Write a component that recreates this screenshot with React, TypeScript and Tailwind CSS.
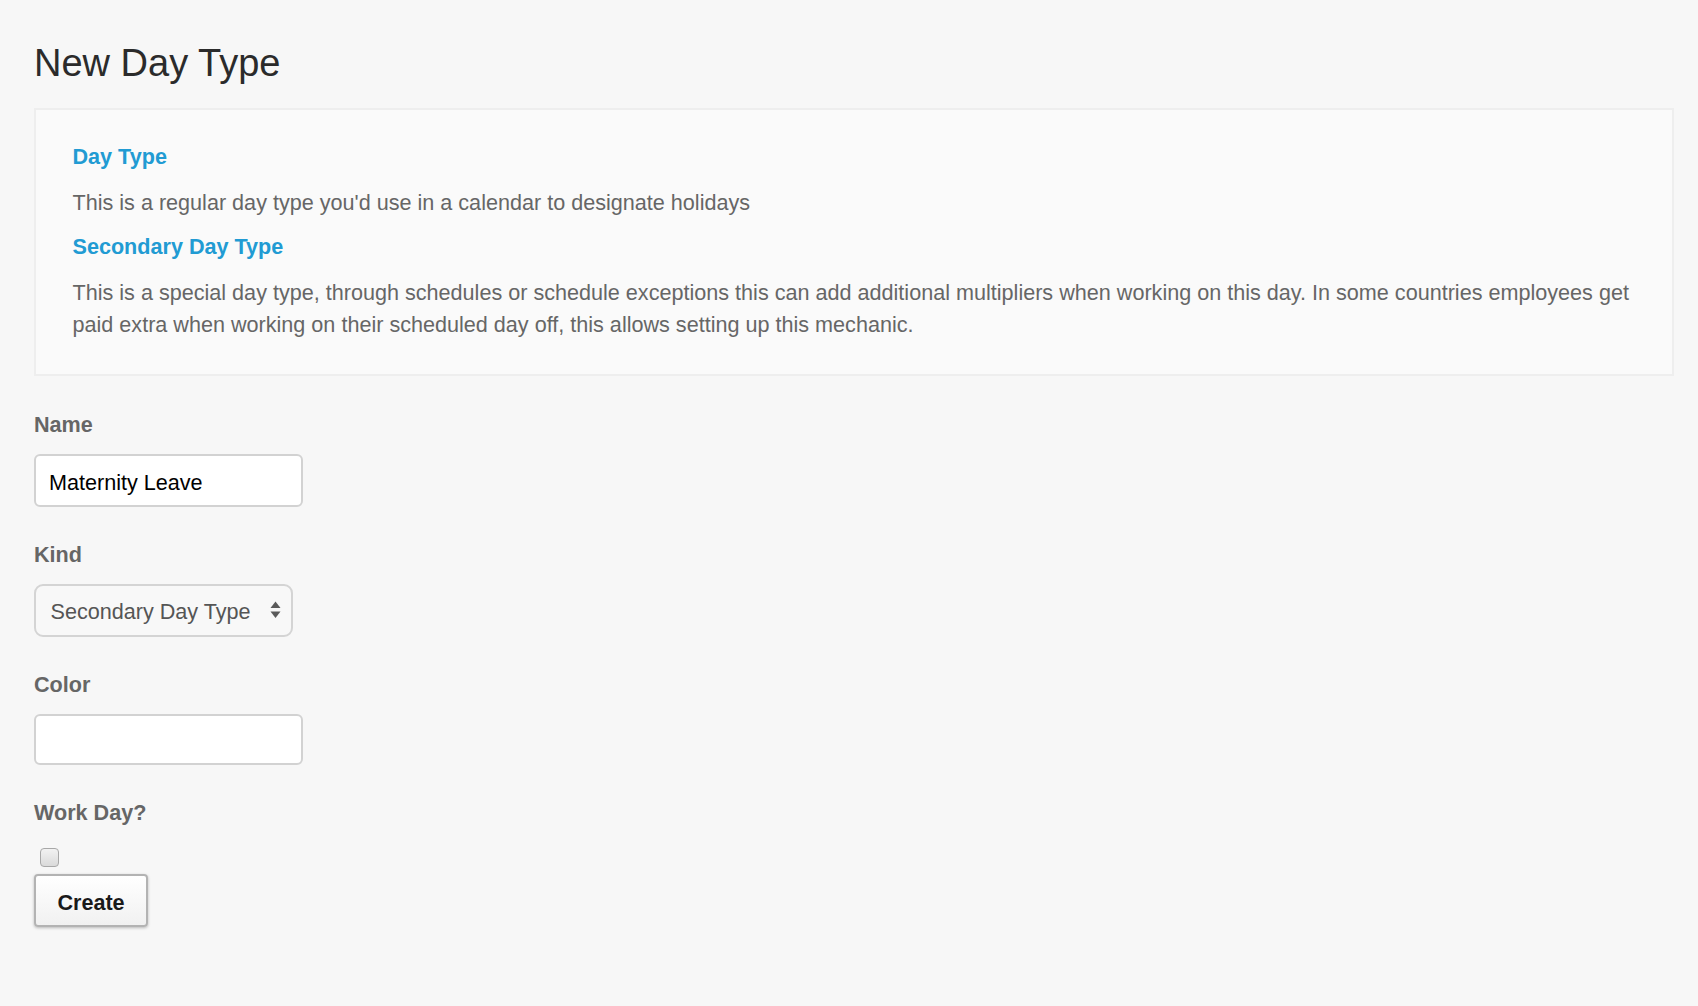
import React from "react";

export default function App() {
  return (
    <div
      className="min-h-[1006px] w-full bg-[#f7f7f7] pl-[34px] pr-[24px] pt-[43px] pb-[60px] text-[21.6px] leading-[31.5px] text-[#666666]"
      style={{ fontFamily: '"Liberation Sans", Arial, Helvetica, sans-serif' }}
    >
      <h1 className="mb-[25px] text-[38px] font-normal leading-[40px] text-[#2b2b2b]">New Day Type</h1>

      <div className="border-2 border-[#eeeeee] bg-[#fafafa] pl-[36.5px] pr-[36.5px] pt-[31px] pb-[34px]">
        <h4 className="mb-[14.5px] font-bold text-[#219bd3]">Day Type</h4>
        <p className="mb-[12.5px]">This is a regular day type you'd use in a calendar to designate holidays</p>
        <h4 className="mb-[14.5px] font-bold text-[#219bd3]">Secondary Day Type</h4>
        <p>
          This is a special day type, through schedules or schedule exceptions this can add additional multipliers when
          working on this day. In some countries employees get paid extra when working on their scheduled day off, this
          allows setting up this mechanic.
        </p>
      </div>

      <form className="mt-[33px] flex flex-col" onSubmit={(e) => e.preventDefault()}>
        <label className="font-bold text-[#666666]">Name</label>
        <div className="mt-[13.5px] flex h-[53px] w-[269px] items-center rounded-[6px] border-2 border-[#d2d2d2] bg-white pl-[13px] pt-[4px] text-black">
          Maternity Leave
        </div>

        <label className="mt-[32px] font-bold text-[#666666]">Kind</label>
        <div className="mt-[13.5px] flex h-[53px] w-[259px] items-center justify-between rounded-[9px] border-2 border-[#d4d4d4] bg-[#f8f8f8] pl-[14.5px] pr-[10px] text-[#555555]">
          <span className="pt-[2px]">Secondary Day Type</span>
          <svg width="11" height="18" viewBox="0 0 11 18" className="mb-[1px]">
            <path d="M5.5 0.5 L10.5 7 L0.5 7 Z" fill="#5a5a5a" />
            <path d="M0.5 10.5 L10.5 10.5 L5.5 17 Z" fill="#5a5a5a" />
          </svg>
        </div>

        <label className="mt-[32px] font-bold text-[#666666]">Color</label>
        <div className="mt-[13.5px] h-[51px] w-[269px] rounded-[6px] border-2 border-[#d2d2d2] bg-white" />

        <label className="mt-[32px] font-bold text-[#666666]">Work Day?</label>
        <div className="ml-[6px] mt-[19px] h-[19px] w-[19px] rounded-[4px] border-[1.5px] border-[#a8a8a8] bg-gradient-to-b from-[#f2f2f2] to-[#dadada]" />
        <div className="mt-[7px]">
          <button
            type="submit"
            className="h-[53px] w-[114px] rounded-[4px] border-2 border-[#b3b3b3] bg-gradient-to-b from-white to-[#f1f1f1] pt-[5px] font-bold text-[#1a1a1a] shadow-[0_1px_3px_rgba(0,0,0,0.25)]"
          >
            Create
          </button>
        </div>
      </form>
    </div>
  );
}
